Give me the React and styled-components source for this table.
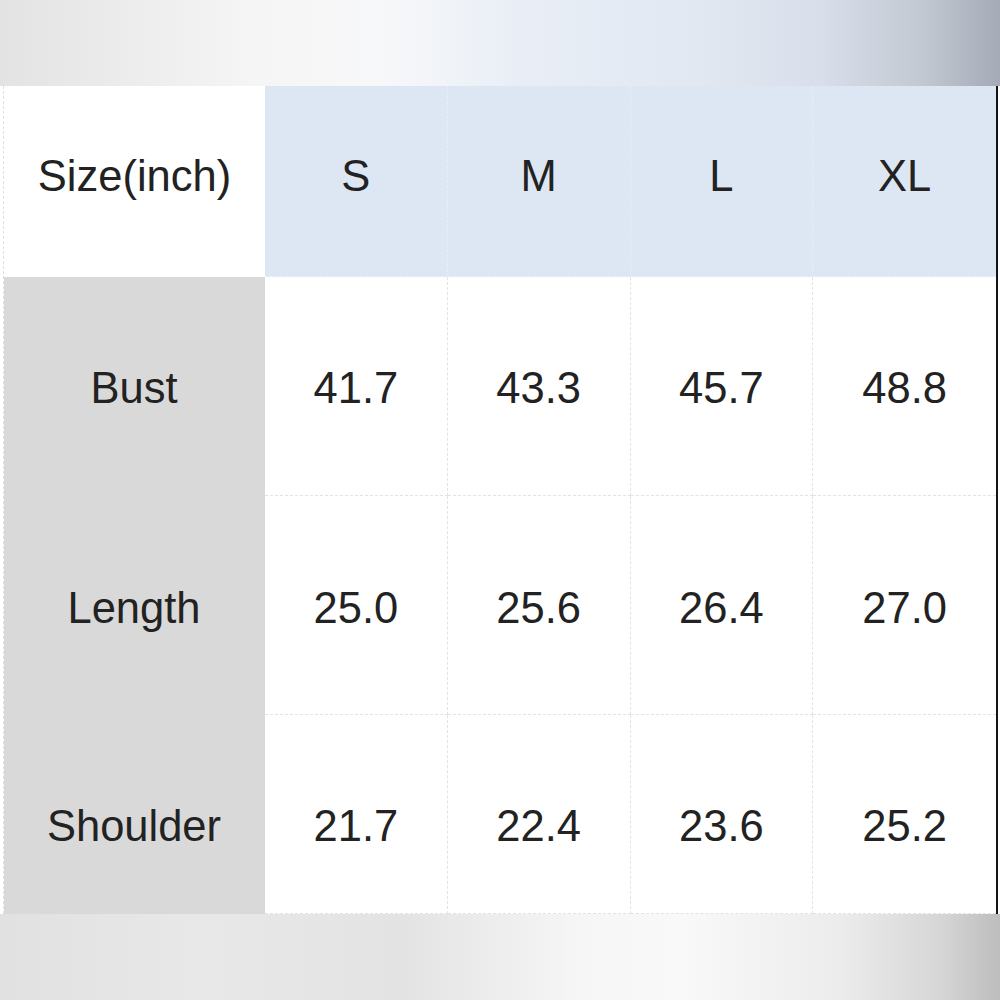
import React from "react"
import styled, { createGlobalStyle } from "styled-components"

const GlobalStyle = createGlobalStyle`
  html, body {
    margin: 0;
    padding: 0;
    background: #fff;
  }
  body {
    font-family: "Liberation Sans", Arial, sans-serif;
    color: #222;
  }
`

const Page = styled.div`
  width: 1000px;
  height: 1000px;
  display: flex;
  flex-direction: column;
  overflow: hidden;
`

const TopBand = styled.div`
  height: 86px;
  background: linear-gradient(90deg, #e4e3e3 0%, #f6f5f5 25%, #f7f8fa 38%, #e9eef6 52%, #e1e8f2 70%, #d9dfea 82%, #c3c9d3 92%, #a4abb6 100%);
`

const BottomBand = styled.div`
  height: 86px;
  background: linear-gradient(90deg, #e2e1e1 0%, #e9e8e8 20%, #e3e3e3 40%, #f6f6f6 58%, #f9f9f9 68%, #ececec 84%, #d6d6d6 94%, #bdbdbd 100%);
`

const TableWrap = styled.div`
  height: 828px;
  display: flex;
  background: #fff;
`

const Table = styled.div`
  margin-left: 3px;
  width: 992px;
  border-left: 1px dashed #e0e0e0;
  border-right: 2px solid #141414;
  display: grid;
  grid-template-columns: 261px repeat(4, 1fr);
  grid-template-rows: 191px 219px 219px 199px;
`

// $shift moves the text down (positive) or up (negative) inside the cell
const Cell = styled.div`
  display: flex;
  align-items: center;
  justify-content: center;
  padding-top: ${p => Math.max(p.$shift || 0, 0)}px;
  padding-bottom: ${p => Math.max(-(p.$shift || 0), 0)}px;
  box-sizing: border-box;
  font-size: 43.5px;
  background: ${p => p.$bg || "#fff"};
  border-right: 1px dashed ${p => p.$line || "#e3e3e3"};
  border-bottom: 1px dashed ${p => p.$line || "#e3e3e3"};
  &:nth-child(5n) {
    border-right: none;
  }
`

const HeadLabel = styled(Cell)`
  border-right: none;
  border-bottom: none;
`

const sizes = ["S", "M", "L", "XL"]

const rows = [
  { name: "Bust", values: ["41.7", "43.3", "45.7", "48.8"], shift: 4 },
  { name: "Length", values: ["25.0", "25.6", "26.4", "27.0"], shift: 6 },
  { name: "Shoulder", values: ["21.7", "22.4", "23.6", "25.2"], shift: 24 },
]

export default function App() {
  return <Page>
    <GlobalStyle />
    <TopBand />
    <TableWrap>
      <Table>
        <HeadLabel $shift={-10}>Size(inch)</HeadLabel>
        {sizes.map(s => <Cell key={s} $bg="#dde7f4" $line="#e6eef8" $shift={-10}>{s}</Cell>)}
        {rows.map(r => <React.Fragment key={r.name}>
          <Cell $bg="#d9d9d9" $line="#d9d9d9" $shift={r.shift}>{r.name}</Cell>
          {r.values.map((v, i) => <Cell key={i} $shift={r.shift}>{v}</Cell>)}
        </React.Fragment>)}
      </Table>
    </TableWrap>
    <BottomBand />
  </Page>
}
